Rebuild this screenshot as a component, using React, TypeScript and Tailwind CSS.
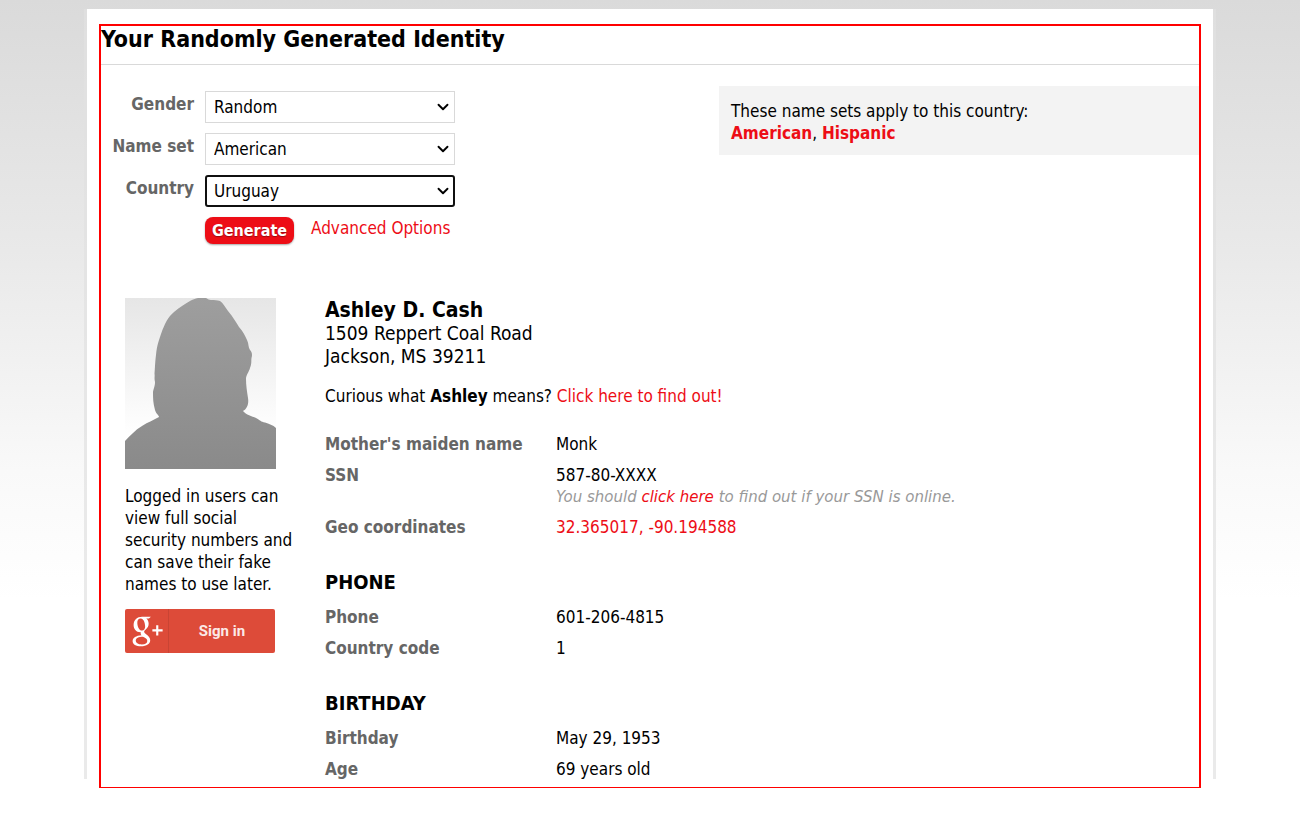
import type { ReactNode } from "react";
import { ChevronDown } from "lucide-react";

function Field({ id, label, options, value, focused }: { id: string; label: string; options: string[]; value: string; focused?: boolean }) {
  return (
    <div className="flex gap-[11px]">
      <label htmlFor={id} className="w-[93px] pt-[2px] text-right font-bold leading-[22px] text-[#666666]">
        {label}
      </label>
      <div className="grid w-[250px] items-center">
        <select
          id={id}
          defaultValue={value}
          className={
            focused
              ? "col-start-1 row-start-1 h-8 w-full appearance-none rounded-[3px] border-2 border-[#101010] bg-white pl-[7px] outline-none"
              : "col-start-1 row-start-1 h-8 w-full appearance-none border border-[#d9d9d9] bg-white pl-2 outline-none"
          }
        >
          {options.map((o) => (
            <option key={o}>{o}</option>
          ))}
        </select>
        <ChevronDown className="pointer-events-none col-start-1 row-start-1 mr-[3px] size-[18px] justify-self-end text-black" strokeWidth={2.5} />
      </div>
    </div>
  );
}

function RedLink({ children, bold }: { children: ReactNode; bold?: boolean }) {
  return (
    <a href="#" className={bold ? "font-bold text-[#ed0d16]" : "text-[#ed0d16]"}>
      {children}
    </a>
  );
}

function Row({ label, children }: { label: string; children: ReactNode }) {
  return (
    <div className="flex pb-[9px]">
      <dt className="w-[231px] shrink-0 font-bold text-[#666666]">{label}</dt>
      <dd>{children}</dd>
    </div>
  );
}

function SectionTitle({ children }: { children: ReactNode }) {
  return <h3 className="mt-[23px] mb-3 text-[20px] leading-6 font-bold uppercase">{children}</h3>;
}

function Avatar() {
  return (
    <svg viewBox="0 0 151 171" className="block h-[171px] w-[151px]" role="img" aria-label="Silhouette">
      <defs>
        <linearGradient id="sky" x1="0" y1="0" x2="0" y2="1">
          <stop offset="0" stopColor="#e6e6e6" />
          <stop offset="0.8" stopColor="#ffffff" />
        </linearGradient>
        <linearGradient id="body" x1="0" y1="0" x2="0" y2="1">
          <stop offset="0" stopColor="#9e9e9e" />
          <stop offset="1" stopColor="#8a8a8a" />
        </linearGradient>
      </defs>
      <rect width="151" height="171" fill="url(#sky)" />
      <path
        fill="url(#body)"
        d="M0 143 C5 138 10 132 17 128 C23 124 29 122 34 119 C34 117 31 116 30 112 C28 105 28 100 28 94 C29 89 30 88 30 84 C29 80 30 78 29.500 76 C30 70 30 65 31 57 C32 47 34 42 36 36 C40 25 43 19 49 14 C55 9 60 6 65 3 C70 0 76 -1 81 0 C83 1 84 2 86 2 C90 2 92 2 95 3 C98 5 100 9 103 13 C108 19 111 24 114 29 C118 33 120 38 122 42 C124 46 123 49 125 52 C127 54 127.500 57 126.500 60 C126 63 127 65 125 70 C124 74 121 77 121 81 C121 87 122 94 123 100 C124 106 122 111 118 113 C121 117 127 118 131 120 C135 122 136 124 140 124.500 C144 126 148 127 151 130 V171 H0 Z"
      />
    </svg>
  );
}

function GooglePlusMark() {
  return (
    <svg viewBox="0 0 44 44" className="h-11 w-[43px]" aria-hidden="true">
      <path
        fill="#ffffff"
        fillRule="evenodd"
        d="M17.500 7.500 H26.500 L24.500 9.300 H21.800 C23.400 10.600 24.200 12.400 24.200 14.600 C24.200 17.200 23 19 21.200 20.400 C20 21.400 19.600 22 19.600 22.800 C19.600 23.600 20.400 24.300 21.600 25.200 C24 27 25.800 28.700 25.800 31.400 C25.800 35 22.200 37.600 16.400 37.600 C11.200 37.600 7.800 35.600 7.800 32.400 C7.800 29 11.200 26.800 17 26.400 C16.200 25.500 15.800 24.600 16.200 23.200 C11.400 23.400 8.800 20 8.800 15.800 C8.800 11 12.400 7.500 17.500 7.500 Z M16.200 9.200 C13.600 9.200 12.400 11.200 12.600 14 C12.800 17.600 14.600 21.600 17.400 21.600 C19.600 21.600 20.800 19.800 20.600 17 C20.400 13 18.800 9.200 16.200 9.200 Z M18.400 28 C13.800 28 11 29.400 11 31.800 C11 34.200 13.400 35.800 17.200 35.800 C20.800 35.800 22.800 34.400 22.800 32.200 C22.800 30.400 21.600 29.600 18.400 28 Z"
      />
      <path d="M33 16 V26.500 M28 21.300 H38.500" fill="none" stroke="#ffffff" strokeWidth="2.200" />
    </svg>
  );
}

export default function App() {
  return (
    <div className="min-h-screen bg-white bg-[linear-gradient(#dadada_0px,#e9e9e9_250px,#f9f9f9_470px,#ffffff_600px)] pt-[9px] pb-[34px] font-['DejaVu_Sans_Condensed','DejaVu_Sans',sans-serif] text-[17px] leading-[22px] text-black">
      <div className="mx-auto flex max-w-[1132px] flex-col border-x-[3px] border-[#e1e1e1]/70 bg-white bg-clip-padding px-3 pt-[15px]">
        <main className="-mb-[9px] border-2 border-b border-[#ff0000] pb-2">
          <h1 className="border-b border-[#d9d9d9] pb-3 text-[23px] leading-[26px] font-bold">Your Randomly Generated Identity</h1>

          <div className="flex items-start justify-between pt-[21px]">
            <form className="flex flex-col gap-[10px] pt-[5px]" onSubmit={(e) => e.preventDefault()}>
              <Field id="gender" label="Gender" value="Random" options={["Random", "Male", "Female"]} />
              <Field id="nameset" label="Name set" value="American" options={["American", "Hispanic"]} />
              <Field id="country" label="Country" value="Uruguay" options={["Uruguay", "United States"]} focused />
              <div className="flex items-start pl-[104px]">
                <button
                  type="submit"
                  className="h-[27px] w-[89px] rounded-lg bg-[#ed0d16] text-[16px] leading-[26px] font-bold text-white shadow-[0_1px_2px_rgba(0,0,0,0.35)] [text-shadow:0_1px_1px_rgba(0,0,0,0.35)]"
                >
                  Generate
                </button>
                <a href="#" className="ml-[17px] text-[#ed0d16]">
                  Advanced Options
                </a>
              </div>
            </form>
            <aside className="w-[480px] bg-[#f3f3f3] px-3 pt-[14px] pb-[11px]">
              <p>These name sets apply to this country:</p>
              <p>
                <RedLink bold>American</RedLink>, <RedLink bold>Hispanic</RedLink>
              </p>
            </aside>
          </div>

          <div className="flex overflow-hidden pt-[54px] pl-6">
            <aside className="w-[200px] shrink-0">
              <Avatar />
              <p className="w-[176px] pt-4">Logged in users can view full social security numbers and can save their fake names to use later.</p>
              <button type="button" className="mt-[14px] flex h-11 w-[150px] overflow-hidden rounded-[2px] bg-[#dd4b39] text-white">
                <span className="border-r border-[#c94434]">
                  <GooglePlusMark />
                </span>
                <span className="flex-1 text-center font-['Roboto',sans-serif] text-[15px] leading-[44px] font-bold text-[#fbe9e7]">Sign in</span>
              </button>
            </aside>

            <section className="-mb-[10px] flex-1">
              <h2 className="text-[21px] leading-6 font-bold">Ashley D. Cash</h2>
              <address className="text-[19px] leading-[23px] not-italic">
                1509 Reppert Coal Road
                <br />
                Jackson, MS 39211
              </address>
              <p className="pt-[17px] pb-[26px]">
                Curious what <b>Ashley</b> means? <RedLink>Click here to find out!</RedLink>
              </p>

              <dl>
                <Row label="Mother's maiden name">Monk</Row>
                <Row label="SSN">
                  587-80-XXXX
                  <p className="-mb-px font-['DejaVu_Sans',sans-serif] text-[15px] text-[#999999] italic">
                    You should <RedLink>click here</RedLink> to find out if your SSN is online.
                  </p>
                </Row>
                <Row label="Geo coordinates">
                  <RedLink>32.365017, -90.194588</RedLink>
                </Row>
              </dl>

              <SectionTitle>Phone</SectionTitle>
              <dl>
                <Row label="Phone">601-206-4815</Row>
                <Row label="Country code">1</Row>
              </dl>

              <SectionTitle>Birthday</SectionTitle>
              <dl>
                <Row label="Birthday">May 29, 1953</Row>
                <Row label="Age">69 years old</Row>
              </dl>
            </section>
          </div>
        </main>
      </div>
    </div>
  );
}
